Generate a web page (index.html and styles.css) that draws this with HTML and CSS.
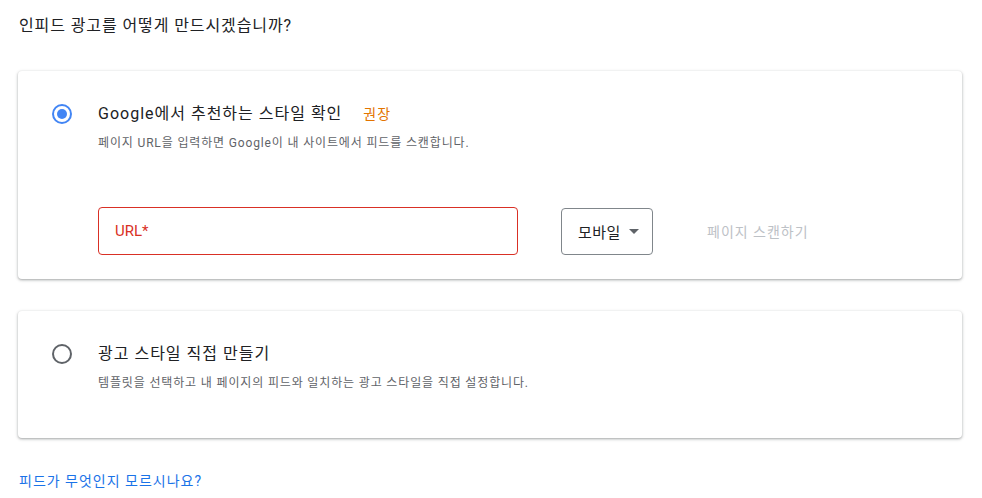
FILE: index.html
```
<!DOCTYPE html>
<html lang="ko">
<head>
<meta charset="utf-8">
<link rel="stylesheet" href="styles.css">
</head>
<body>
<div class="page">
  <h1 class="heading">인피드 광고를 어떻게 만드시겠습니까?</h1>

  <section class="card card-first">
    <div class="option">
      <span class="radio radio-on"><span class="dot"></span></span>
      <div class="option-body">
        <div class="option-title">Google에서 추천하는 스타일 확인 <span class="badge">권장</span></div>
        <div class="option-desc">페이지 URL을 입력하면 Google이 내 사이트에서 피드를 스캔합니다.</div>
        <div class="scan-row">
          <div class="url-field"><span class="url-label">URL*</span></div>
          <div class="device-select">모바일 <span class="caret"></span></div>
          <span class="scan-btn">페이지 스캔하기</span>
        </div>
      </div>
    </div>
  </section>

  <section class="card card-second">
    <div class="option">
      <span class="radio"></span>
      <div class="option-body">
        <div class="option-title">광고 스타일 직접 만들기</div>
        <div class="option-desc">템플릿을 선택하고 내 페이지의 피드와 일치하는 광고 스타일을 직접 설정합니다.</div>
      </div>
    </div>
  </section>

  <a class="help-link" href="#">피드가 무엇인지 모르시나요?</a>
</div>
</body>
</html>
```

FILE: styles.css
```
* { box-sizing: border-box; }
html, body { margin: 0; padding: 0; background: #fff; }
body {
  font-family: Roboto, "Noto Sans CJK KR", "Noto Sans", sans-serif;
  color: #202124;
}
.page {
  padding: 14px 20px 0 18px;
  display: flex;
  flex-direction: column;
}
.heading {
  margin: 0 0 33px 1px;
  font-size: 16px;
  font-weight: 400;
  line-height: 24px;
  letter-spacing: 0.9px;
  color: #202124;
}
.card {
  width: 944px;
  background: #fff;
  border-radius: 4px;
  box-shadow: 0 1px 2px rgba(60,64,67,.3), 0 1px 3px 1px rgba(60,64,67,.15);
}
.card-first { padding: 31px 0 24px 34px; }
.card-second { margin-top: 32px; padding: 31px 0 47px 34px; }
.option {
  display: flex;
  align-items: flex-start;
  gap: 26px;
}
.radio {
  flex: none;
  width: 20px;
  height: 20px;
  margin-top: 2px;
  border: 2px solid #5f6368;
  border-radius: 50%;
  display: flex;
  align-items: center;
  justify-content: center;
}
.radio-on { border-color: #4285f4; }
.dot {
  width: 10px;
  height: 10px;
  border-radius: 50%;
  background: #4285f4;
}
.option-body { display: flex; flex-direction: column; }
.option-title {
  font-size: 16px;
  line-height: 24px;
  letter-spacing: 1px;
  color: #202124;
}
.badge {
  margin-left: 16px;
  font-size: 14px;
  letter-spacing: 1px;
  color: #e37400;
}
.option-desc {
  margin-top: 9px;
  font-size: 12px;
  line-height: 16px;
  letter-spacing: 0.85px;
  color: #5f6368;
}
.scan-row {
  margin-top: 56px;
  display: flex;
  align-items: center;
}
.url-field {
  width: 420px;
  height: 48px;
  border: 1px solid #d93025;
  border-radius: 4px;
  display: flex;
  align-items: center;
  padding-left: 16px;
}
.url-label {
  font-size: 15px;
  color: #d93025;
}
.device-select {
  margin-left: 43px;
  width: 92px;
  height: 47px;
  border: 1px solid #80868b;
  border-radius: 4px;
  display: flex;
  align-items: center;
  padding-left: 16px;
  font-size: 15px;
  letter-spacing: 0.5px;
  color: #202124;
}
.caret {
  margin-left: 8px;
  width: 0;
  height: 0;
  border-left: 5px solid transparent;
  border-right: 5px solid transparent;
  border-top: 5px solid #5f6368;
}
.scan-btn {
  margin-left: 54px;
  font-size: 14px;
  letter-spacing: 1px;
  color: #bdc1c6;
}
.help-link {
  margin: 33px 0 0 1px;
  font-size: 14px;
  line-height: 20px;
  letter-spacing: 1px;
  color: #1a73e8;
  text-decoration: none;
  align-self: flex-start;
}
```
